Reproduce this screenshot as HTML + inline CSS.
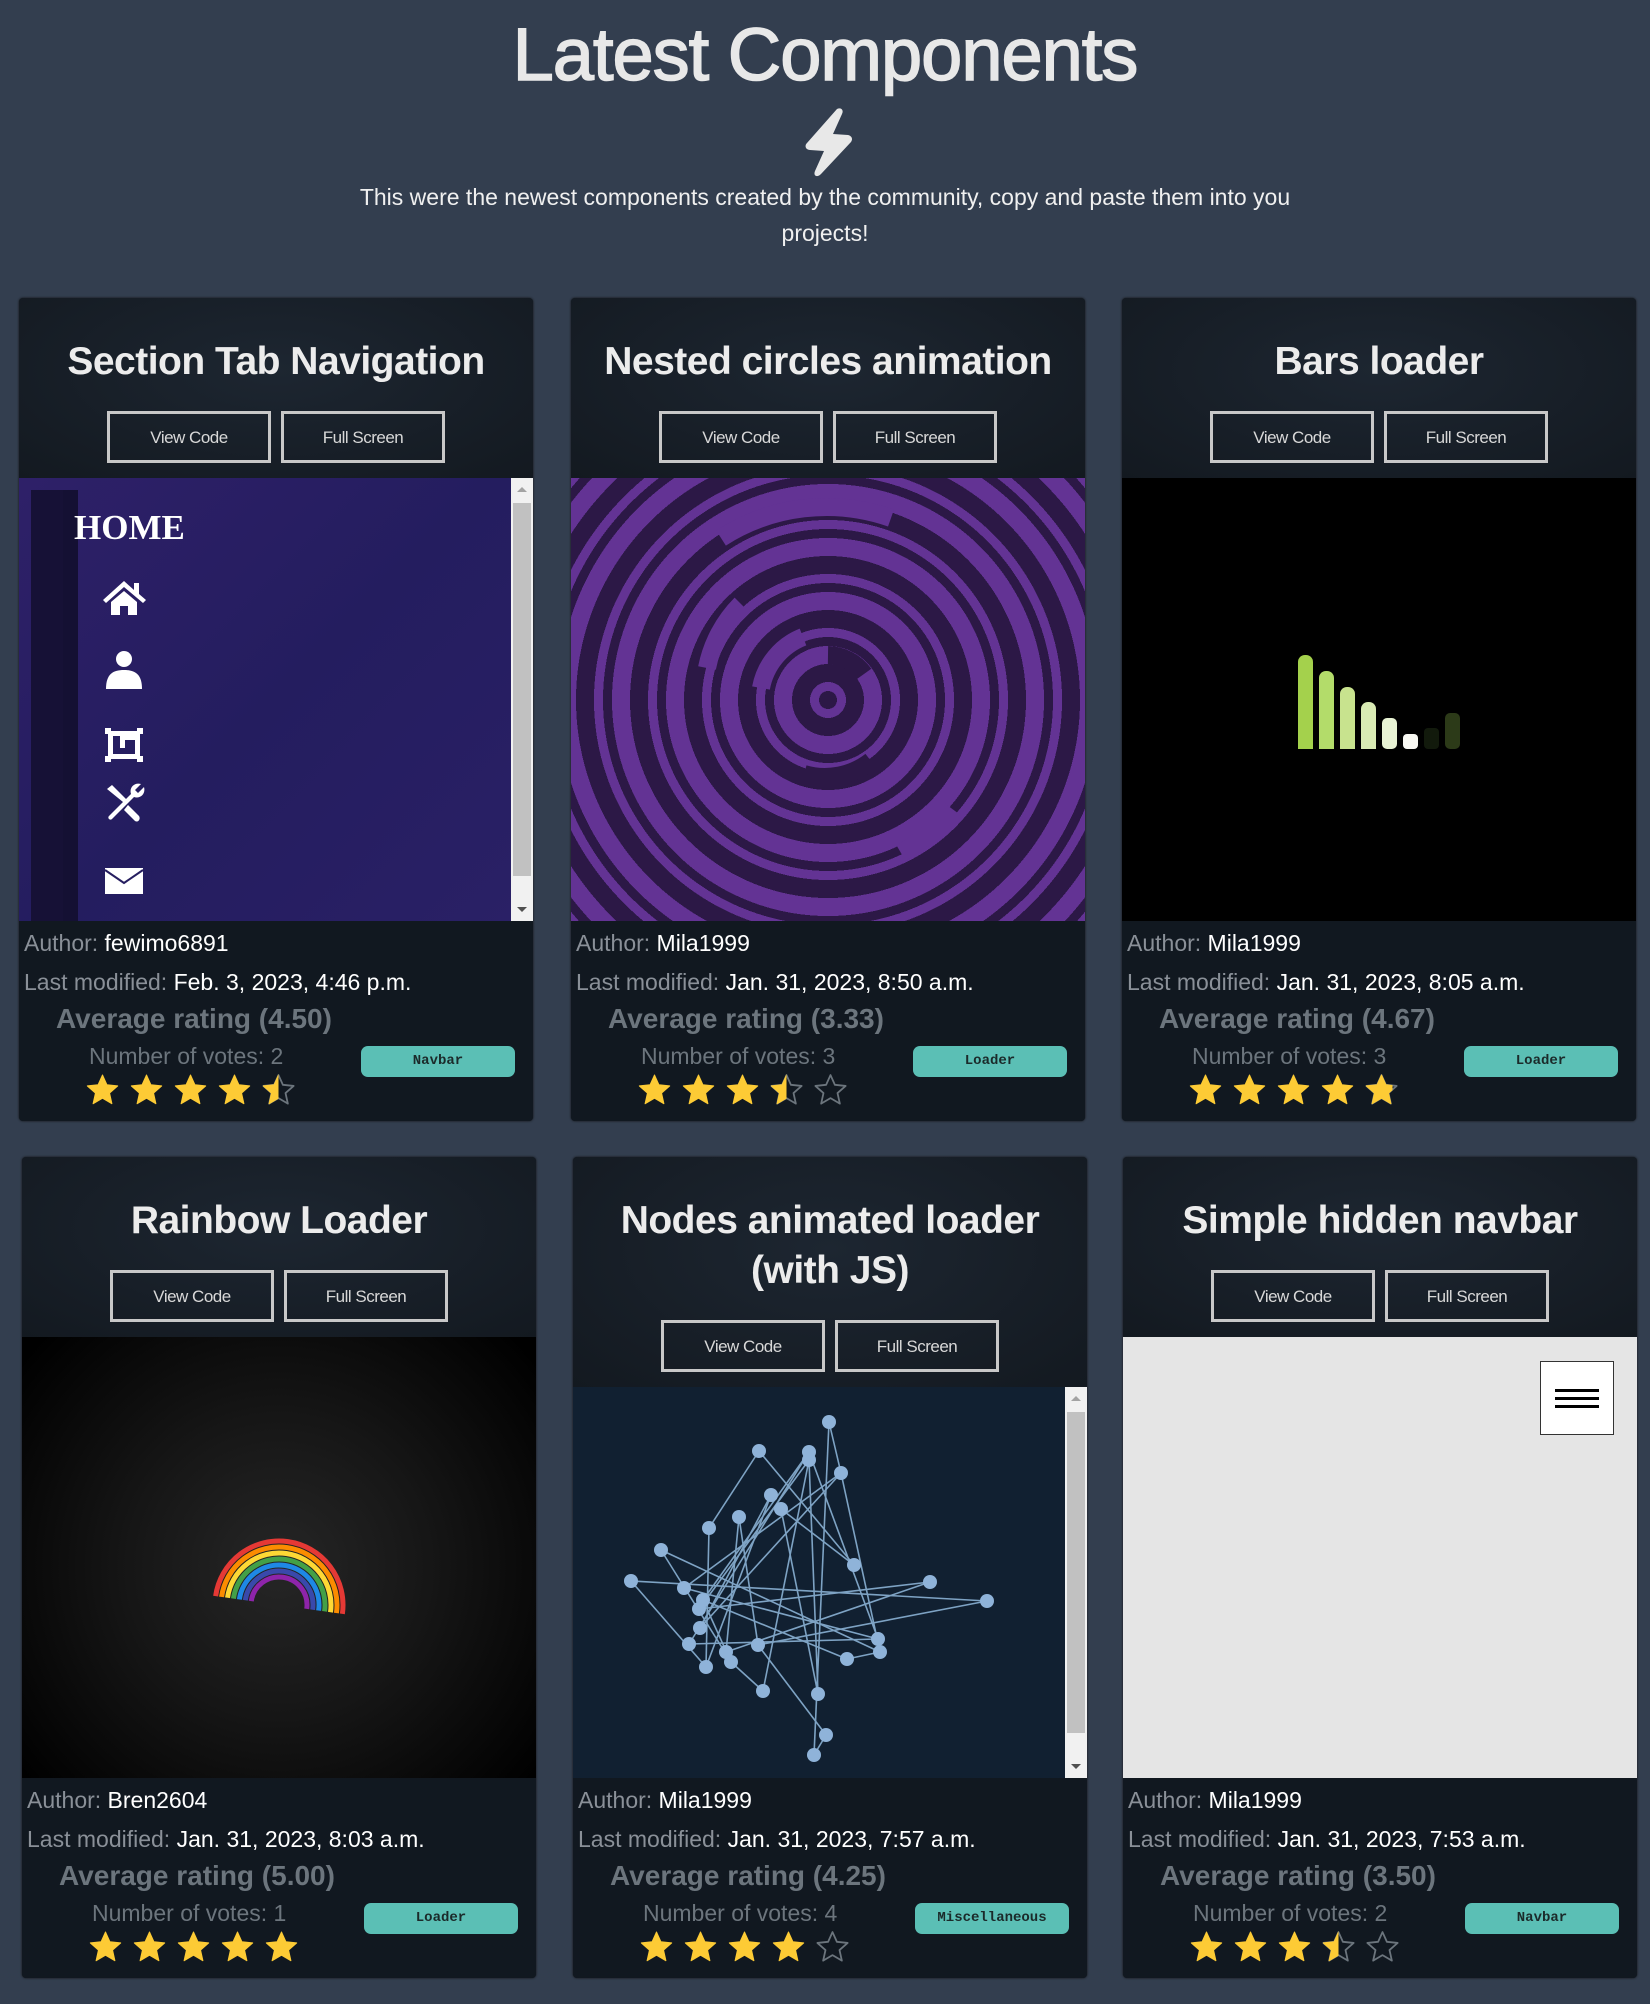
<!DOCTYPE html>
<html><head><meta charset="utf-8">
<style>
*{box-sizing:border-box;margin:0;padding:0}
body{width:1650px;height:2004px;background:#333e4f;font-family:"Liberation Sans",sans-serif;position:relative;overflow:hidden}
h1{position:absolute;top:12px;left:0;width:1650px;text-align:center;font-size:74px;font-weight:normal;color:#e8e8e8;letter-spacing:-1px;-webkit-text-stroke:1.5px #e8e8e8}
.bolt{position:absolute;left:799px;top:106px}
.sub{position:absolute;top:179px;left:335px;width:980px;text-align:center;color:#f0f0f0;font-size:23px;line-height:36px}
.card{position:absolute;width:514px;border-radius:4px;background:#121820;box-shadow:0 0 2px #111;display:flex;flex-direction:column;overflow:hidden}
.hd{background:radial-gradient(ellipse at 50% 40%,#1d2631,#131920);text-align:center;padding:0 10px 0}
.hd h2{color:#ececec;font-size:39px;line-height:50px;padding-top:39px;margin-bottom:-2px;letter-spacing:-0.5px}
.btns{display:flex;justify-content:center;gap:10px;padding:26px 0 15px}
.btns div{width:164px;height:52px;border:3px solid #c8c8c8;color:#d8d8d8;font-size:17px;line-height:47px;text-align:center;letter-spacing:-0.5px}
.pv{flex:1;position:relative;overflow:hidden}
.info{height:200px;position:relative;background:#111820;color:#fff;font-size:23px}
.info .l{position:absolute;left:5px;white-space:nowrap}
.info .l span{color:#8a9098}
.avg{position:absolute;left:37px;top:82px;color:#6c757d;font-weight:bold;font-size:28px}
.votes{position:absolute;left:70px;top:122px;color:#6c757d;font-size:23px}
.stars{position:absolute;left:67px;top:152px;display:flex;gap:11px}
.badge{position:absolute;right:18px;top:125px;width:154px;height:31px;border-radius:7px;background:#5bbfb5;color:#1b2a2a;font-family:"Liberation Mono",monospace;font-size:14px;text-align:center;line-height:31px;font-weight:bold}
.sb{position:absolute;right:0;top:0;bottom:0;width:22px;background:#f1f1f1}
.sb .th{position:absolute;left:2px;right:2px;top:25px;bottom:45px;background:#c1c1c1}
.sb .up,.sb .dn{position:absolute;left:6px;width:0;height:0;border-left:5px solid transparent;border-right:5px solid transparent}
.sb .up{top:9px;border-bottom:5px solid #a3a3a3}
.sb .dn{bottom:9px;border-top:5px solid #505050}
</style></head><body>
<h1>Latest Components</h1>
<svg class="bolt" width="58" height="72" viewBox="0 0 58 72"><path d="M38 3 C42 1 45 4 43 8 L34 28 L49 29 C53 30 54 33 52 36 L22 68 C18 72 14 70 16 65 L25 45 L11 44 C7 44 5 40 8 37 Z" fill="#e8e8e8"/></svg>
<div class="sub">This were the newest components created by the community, copy and paste them into you projects!</div>

<div class="card" style="left:19px;top:298px;height:823px">
 <div class="hd"><h2>Section Tab Navigation</h2><div class="btns"><div>View Code</div><div>Full Screen</div></div></div>
 <div class="pv" style="background:linear-gradient(135deg,#2e2068,#241d5f 50%,#2a2066)">
  <div style="position:absolute;left:12px;top:12px;width:47px;bottom:0;background:#141033"></div>
  <div style="position:absolute;left:12px;top:12px;width:32px;bottom:0;background:#161136"></div>
  <div style="position:absolute;left:55px;top:30px;color:#fff;font-family:'Liberation Serif',serif;font-weight:bold;font-size:35px">HOME</div>
  <svg style="position:absolute;left:82px;top:100px" width="48" height="340" viewBox="0 0 48 340" fill="#fff">
   <path d="M2 22 L23 3 L33 12 L33 5 L38 5 L38 16 L45 22 L42 25 L23 9 L5 25 Z M10 24 L23 13 L36 24 L36 37 L27 37 L27 28 L19 28 L19 37 L10 37Z"/>
   <circle cx="23" cy="81" r="8"/><path d="M5 111 C5 96 12 92 23 92 C34 92 41 96 41 111Z"/>
   <path d="M4 150 h6 v3 h26 v-3 h6 v6 h-3 v22 h3 v6 h-6 v-3 h-26 v3 h-6 v-6 h3 v-22 h-3z M12 158 v18 h22 v-14 h-10 v8 h-5 v-12z" fill-rule="evenodd"/>
   <path d="M6 211 L11 207 L25 221 L22 224 Z M27 227 L38 238 C40 241 37 245 34 243 L23 232 Z M8 238 L30 216 C28 210 33 204 40 206 L34 212 L37 215 L43 209 C45 216 39 221 33 219 L11 241 C9 243 6 240 8 238Z"/>
   <path d="M4 290 h38 v26 h-38z" /><path d="M4 292 L23 305 L42 292" stroke="#261e60" stroke-width="2" fill="none"/>
  </svg>
  <div class="sb"><div class="up"></div><div class="th"></div><div class="dn"></div></div>
 </div>
 <div class="info">
  <div class="l" style="top:9px"><span>Author:</span> fewimo6891</div>
  <div class="l" style="top:48px"><span>Last modified:</span> Feb. 3, 2023, 4:46 p.m.</div>
  <div class="avg">Average rating (4.50)</div>
  <div class="votes">Number of votes: 2</div>
  <div class="stars" data-r="4.5"></div>
  <div class="badge">Navbar</div>
 </div>
</div>

<div class="card" style="left:571px;top:298px;height:823px">
 <div class="hd"><h2>Nested circles animation</h2><div class="btns"><div>View Code</div><div>Full Screen</div></div></div>
 <div class="pv" style="background:repeating-radial-gradient(circle at 257px 222px,#2c1846 0 9px,#633394 9px 18px,#2c1846 18px 36px,#633394 36px 54px)">
  <svg style="position:absolute;left:0;top:0" width="514" height="443">
   <g fill="none" stroke-width="18">
    <path d="M257 177 A45 45 0 0 1 293 196" stroke="#2c1846"/>
    <path d="M190 210 A68 68 0 0 1 232 159" stroke="#633394"/>
    <path d="M300 283 A75 75 0 0 1 233 296" stroke="#2c1846"/>
    <path d="M136 190 A125 125 0 0 1 170 126" stroke="#633394"/>
    <path d="M150 60 A195 195 0 0 1 320 40" stroke="#633394"/>
    <path d="M380 330 A165 165 0 0 1 330 375" stroke="#633394"/>
   </g>
  </svg>
 </div>
 <div class="info">
  <div class="l" style="top:9px"><span>Author:</span> Mila1999</div>
  <div class="l" style="top:48px"><span>Last modified:</span> Jan. 31, 2023, 8:50 a.m.</div>
  <div class="avg">Average rating (3.33)</div>
  <div class="votes">Number of votes: 3</div>
  <div class="stars" data-r="3.33"></div>
  <div class="badge">Loader</div>
 </div>
</div>

<div class="card" style="left:1122px;top:298px;height:823px">
 <div class="hd"><h2>Bars loader</h2><div class="btns"><div>View Code</div><div>Full Screen</div></div></div>
 <div class="pv" style="background:#000">
  <svg style="position:absolute;left:0;top:0" width="514" height="443">
   <g>
    <rect x="176" y="177" width="15" height="94" rx="7" fill="#a4d14c"/><rect x="176" y="264" width="15" height="7" fill="#a4d14c"/>
    <rect x="197" y="193" width="15" height="78" rx="7" fill="#b3dc6a"/><rect x="197" y="264" width="15" height="7" fill="#b3dc6a"/>
    <rect x="218" y="209" width="15" height="62" rx="7" fill="#c8e38e"/><rect x="218" y="264" width="15" height="7" fill="#c8e38e"/>
    <rect x="239" y="224" width="15" height="47" rx="7" fill="#d9ebb4"/><rect x="239" y="264" width="15" height="7" fill="#d9ebb4"/>
    <rect x="260" y="240" width="15" height="31" rx="5" fill="#e8f3d4"/>
    <rect x="281" y="256" width="15" height="15" rx="4" fill="#f8f8f2"/>
    <rect x="302" y="250" width="15" height="21" rx="4" fill="#121a0c"/>
    <rect x="323" y="235" width="15" height="36" rx="5" fill="#2c3a18"/>
   </g>
  </svg>
 </div>
 <div class="info">
  <div class="l" style="top:9px"><span>Author:</span> Mila1999</div>
  <div class="l" style="top:48px"><span>Last modified:</span> Jan. 31, 2023, 8:05 a.m.</div>
  <div class="avg">Average rating (4.67)</div>
  <div class="votes">Number of votes: 3</div>
  <div class="stars" data-r="4.8"></div>
  <div class="badge">Loader</div>
 </div>
</div>

<div class="card" style="left:22px;top:1157px;height:821px">
 <div class="hd"><h2>Rainbow Loader</h2><div class="btns"><div>View Code</div><div>Full Screen</div></div></div>
 <div class="pv" style="background:radial-gradient(circle at 257px 230px,#262626 0,#161616 150px,#000 330px)">
  <svg style="position:absolute;left:0;top:0" width="514" height="442">
   <g fill="none" stroke-width="5" transform="rotate(8 257 268)">
    <path d="M193 268 A64 64 0 0 1 321 268" stroke="#e53935"/>
    <path d="M199 268 A58 58 0 0 1 315 268" stroke="#fb8c00"/>
    <path d="M205 268 A52 52 0 0 1 309 268" stroke="#fdd835"/>
    <path d="M211 268 A46 46 0 0 1 303 268" stroke="#43a047"/>
    <path d="M217 268 A40 40 0 0 1 297 268" stroke="#1e88e5"/>
    <path d="M223 268 A34 34 0 0 1 291 268" stroke="#3949ab"/>
    <path d="M229 268 A28 28 0 0 1 285 268" stroke="#8e24aa"/>
   </g>
  </svg>
 </div>
 <div class="info">
  <div class="l" style="top:9px"><span>Author:</span> Bren2604</div>
  <div class="l" style="top:48px"><span>Last modified:</span> Jan. 31, 2023, 8:03 a.m.</div>
  <div class="avg">Average rating (5.00)</div>
  <div class="votes">Number of votes: 1</div>
  <div class="stars" data-r="5"></div>
  <div class="badge">Loader</div>
 </div>
</div>

<div class="card" style="left:573px;top:1157px;height:821px">
 <div class="hd"><h2>Nodes animated loader (with JS)</h2><div class="btns"><div>View Code</div><div>Full Screen</div></div></div>
 <div class="pv" style="background:#112031">
  <svg style="position:absolute;left:0;top:0" width="492" height="392" id="nodes"></svg>
  <div class="sb"><div class="up"></div><div class="th"></div><div class="dn"></div></div>
 </div>
 <div class="info">
  <div class="l" style="top:9px"><span>Author:</span> Mila1999</div>
  <div class="l" style="top:48px"><span>Last modified:</span> Jan. 31, 2023, 7:57 a.m.</div>
  <div class="avg">Average rating (4.25)</div>
  <div class="votes">Number of votes: 4</div>
  <div class="stars" data-r="4"></div>
  <div class="badge">Miscellaneous</div>
 </div>
</div>

<div class="card" style="left:1123px;top:1157px;height:821px">
 <div class="hd"><h2>Simple hidden navbar</h2><div class="btns"><div>View Code</div><div>Full Screen</div></div></div>
 <div class="pv" style="background:#e5e5e5">
  <div style="position:absolute;left:417px;top:24px;width:74px;height:74px;background:#fff;border:1px solid #333">
   <div style="position:absolute;left:14px;width:44px;top:27px;height:3px;background:#000"></div>
   <div style="position:absolute;left:14px;width:44px;top:35px;height:3px;background:#000"></div>
   <div style="position:absolute;left:14px;width:44px;top:43px;height:3px;background:#000"></div>
  </div>
 </div>
 <div class="info">
  <div class="l" style="top:9px"><span>Author:</span> Mila1999</div>
  <div class="l" style="top:48px"><span>Last modified:</span> Jan. 31, 2023, 7:53 a.m.</div>
  <div class="avg">Average rating (3.50)</div>
  <div class="votes">Number of votes: 2</div>
  <div class="stars" data-r="3.5"></div>
  <div class="badge">Navbar</div>
 </div>
</div>

<script>
var P="12,1.5 15.2,8.6 23,9.4 17.1,14.6 18.8,22.3 12,18.3 5.2,22.3 6.9,14.6 1,9.4 8.8,8.6";
document.querySelectorAll('.stars').forEach(function(s,k){
 var r=parseFloat(s.dataset.r),h='';
 for(var i=0;i<5;i++){
  var f=r-i; var w=f>=0.9?24:(f>=0.7?20:(f>=0.25?12:0));
  h+='<svg width="33" height="33" viewBox="0 0 24 24"><defs><clipPath id="c'+k+i+'"><rect x="0" y="0" width="'+w+'" height="24"/></clipPath></defs>'+
   (w<24?'<polygon points="'+P+'" fill="none" stroke="#6c757d" stroke-width="1.3" stroke-linejoin="round"/>':'')+
   '<polygon points="'+P+'" fill="#fdcb35" stroke="#fdcb35" stroke-width="0.8" stroke-linejoin="round" clip-path="url(#c'+k+i+')"/></svg>';
 }
 s.innerHTML=h;
});
var N=[[256,35],[186,64],[236,65],[236,73],[268,86],[198,108],[208,122],[166,130],[136,141],[88,163],[58,194],[111,201],[130,213],[126,222],[127,241],[116,257],[185,258],[153,265],[158,275],[133,280],[305,252],[307,265],[274,272],[357,195],[414,214],[190,304],[245,307],[253,348],[241,368],[281,178]];
var E=[[0,28],[0,4],[4,21],[1,29],[1,8],[2,12],[3,25],[3,13],[4,11],[5,14],[6,29],[7,17],[8,19],[9,18],[10,24],[10,19],[11,20],[12,22],[13,23],[14,4],[15,20],[16,24],[16,27],[17,23],[18,25],[2,20],[26,3],[27,28],[21,22],[6,26],[7,16],[9,21],[12,18],[15,2],[5,19]];
var g='';E.forEach(function(e){var a=N[e[0]],b=N[e[1]];g+='<line x1="'+a[0]+'" y1="'+a[1]+'" x2="'+b[0]+'" y2="'+b[1]+'" stroke="#7ea3c4" stroke-width="1.6"/>';});
N.forEach(function(n){g+='<circle cx="'+n[0]+'" cy="'+n[1]+'" r="7" fill="#8fb3d9"/>';});
document.getElementById('nodes').innerHTML=g;
</script>
</body></html>
